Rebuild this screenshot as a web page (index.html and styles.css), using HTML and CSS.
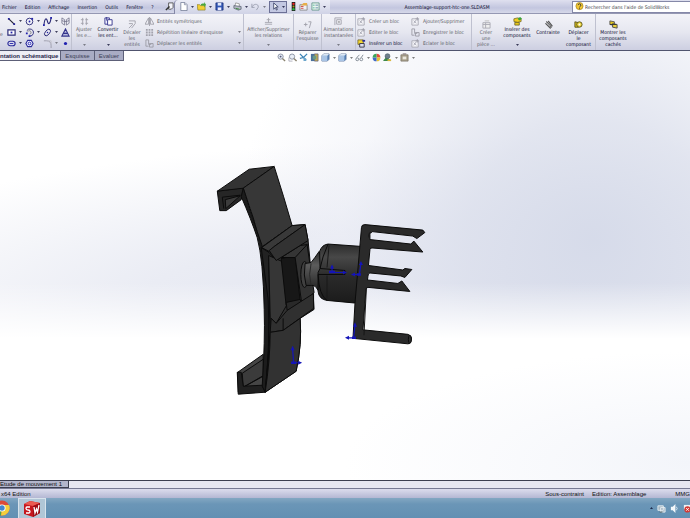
FILE: index.html
```html
<!DOCTYPE html>
<html lang="fr">
<head>
<meta charset="utf-8">
<title>Assemblage-support-htc-one.SLDASM</title>
<link rel="stylesheet" href="styles.css">
</head>
<body>
<svg class="sprite" aria-hidden="true">
  <symbol id="line" viewBox="0 0 10 10"><path d="M2 2L8 8" stroke="#223" stroke-width="1.3"/><path d="M1 1h2v2H1zM7 7h2v2H7z" fill="#229"/></symbol>
  <symbol id="circle" viewBox="0 0 10 10"><circle cx="5" cy="5" r="3.7" fill="none" stroke="#2b2b78"/><circle cx="5" cy="5" r="1" fill="#22a"/><path d="M7 1h2v2H7z" fill="#22a"/></symbol>
  <symbol id="spline" viewBox="0 0 10 10"><path d="M1 9C2 0 4 1 5 5S8 8 9 1" fill="none" stroke="#2b2b78" stroke-width="1.2"/><path d="M0 8h2v2H0zM8 0h2v2H8z" fill="#22a"/></symbol>
  <symbol id="rect" viewBox="0 0 10 10"><path d="M1 2h8v6H1z" fill="#fff" stroke="#2b2b78" stroke-width="1.3"/><path d="M4 4h2v2H4z" fill="#22a"/></symbol>
  <symbol id="arc" viewBox="0 0 10 10"><path d="M2 3a4 4 0 1 1 3 6" fill="none" stroke="#2b2b78"/><path d="M3 4a2 2 0 1 1 2 3" fill="none" stroke="#777"/><path d="M1 5h2v2H1zM4 8h2v2H4z" fill="#22a"/></symbol>
  <symbol id="ellipse" viewBox="0 0 10 10"><ellipse cx="5" cy="5" rx="4.3" ry="2.4" transform="rotate(-50 5 5)" fill="none" stroke="#2b2b78"/><circle cx="5" cy="5" r=".8" fill="#22a"/></symbol>
  <symbol id="slot" viewBox="0 0 10 10"><rect x="1" y="2.5" width="8" height="5" rx="2.5" fill="#dde" stroke="#2b2b9a" stroke-width="1.3"/><path d="M3 5h4" stroke="#22a"/></symbol>
  <symbol id="poly" viewBox="0 0 10 10"><path d="M3 1.5h4L9 5 7 8.500H3L1 5z" fill="#eef" stroke="#2b2b9a" stroke-width="1.2"/><circle cx="5" cy="5" r="1.5" fill="none" stroke="#22a"/></symbol>
  <symbol id="fillet" viewBox="0 0 10 10"><path d="M1 2h3q5 0 5 5v3" fill="none" stroke="#9a9aa8"/><path d="M5 2h4v3" fill="none" stroke="#c4c4ce"/></symbol>
  <symbol id="point" viewBox="0 0 10 10"><circle cx="5" cy="5" r="1.800" fill="#2020b0"/></symbol>
  <symbol id="text" viewBox="0 0 10 10"><path d="M1 9L5 1l4 8zM3 6h4" fill="#b9bde0" stroke="#33338c" stroke-width="1.2"/></symbol>
  <symbol id="plane" viewBox="0 0 10 10"><path d="M1 1l3 2v6L1 7zM6 3l3-2v6L6 9zM4 5h2M1 4l3 1M6 5l3-1" fill="none" stroke="#666680" stroke-width=".8"/></symbol>
  <symbol id="trim" viewBox="0 0 10 10"><path d="M1 3h3M6 3h3M1 7h3M6 7h3M3 1v8M7 1v8" stroke="#a0a0aa" stroke-width="1"/></symbol>
  <symbol id="convert" viewBox="0 0 10 10"><path d="M1 1h5v7H1z" fill="#eef" stroke="#33338c"/><path d="M4 3h5v6H4z" fill="#fff" stroke="#33338c"/><path d="M3 0v4" stroke="#33338c"/></symbol>
  <symbol id="offset" viewBox="0 0 10 10"><path d="M1 1h7v3L4 9M1 4h4v1L1 9" fill="none" stroke="#a0a0aa"/></symbol>
  <symbol id="mirror" viewBox="0 0 10 10"><path d="M4 1v7H0zM6 1v7h4zM5 0v10" fill="none" stroke="#9898a2" stroke-width=".9"/></symbol>
  <symbol id="pattern" viewBox="0 0 10 10"><path d="M1 1h2v2H1zM4 1h2v2H4zM7 1h2v2H7zM1 4h2v2H1zM4 4h2v2H4zM7 4h2v2H7zM1 7h2v2H1zM4 7h2v2H4zM7 7h2v2H7z" fill="#a2a2ac"/></symbol>
  <symbol id="move" viewBox="0 0 10 10"><path d="M1 1h3v5h3M1 1v7h3M5 5h4v4H5z" fill="none" stroke="#9c9ca6"/></symbol>
  <symbol id="relations" viewBox="0 0 10 10"><path d="M5 1v5M3 3h4M1 6h8M1 8h8" stroke="#a4a4ae" fill="none"/></symbol>
  <symbol id="repair" viewBox="0 0 10 10"><path d="M1 5h4M3 3v4M6 2h3L7 9" stroke="#a0a0aa" fill="none"/></symbol>
  <symbol id="snap" viewBox="0 0 10 10"><path d="M1 9V1h8M3 3h5v5H3z" stroke="#a4a4ae" fill="none"/><circle cx="5.500" cy="5.500" r="1" fill="#999"/></symbol>
  <symbol id="block" viewBox="0 0 10 10"><path d="M1 2h7v7H1z" fill="#f4f4f8" stroke="#a8a8b2"/><path d="M3 7l3-4M3 4l3 3M7 0v4M5 2h4" stroke="#9898a4" stroke-width=".8"/></symbol>
  <symbol id="blockin" viewBox="0 0 10 10"><path d="M1 1h6v5H1z" fill="#f3d531" stroke="#665b20" stroke-width=".8"/><path d="M3 5h5v4H3z" fill="#dde" stroke="#334"/><path d="M6 1h3v2H6z" fill="#2b2b9a"/></symbol>
  <symbol id="part" viewBox="0 0 10 10"><path d="M1 3h8v6H1zM1 5h8M4 3v6" fill="#eee" stroke="#aaaab4"/><path d="M3 1h5" stroke="#bbb"/></symbol>
  <symbol id="insert" viewBox="0 0 10 10"><path d="M1 2l4-1 4 1v3L5 6 1 5z" fill="#f1cc22" stroke="#6b641c" stroke-width=".8"/><path d="M5 2l3-2 2 2-3 2z" fill="#39a339"/><path d="M2 6h5v3H2z" fill="#e6c71d" stroke="#5b5520" stroke-width=".8"/></symbol>
  <symbol id="mate" viewBox="0 0 10 10"><path d="M3 2l5 6M5 1.500l4 5M2 4l5 5" stroke="#555" stroke-width="1.4" stroke-linecap="round"/><path d="M3 3l4 4" stroke="#aaa"/></symbol>
  <symbol id="drag" viewBox="0 0 10 10"><path d="M1 2l4 1v5L1 8z" fill="#e2c51e" stroke="#554f1b"/><circle cx="6" cy="5" r="3" fill="#efd842" stroke="#554f1b"/><circle cx="6" cy="5" r="1" fill="#fff"/></symbol>
  <symbol id="show" viewBox="0 0 10 10"><path d="M1 1l5 1v4L1 5z" fill="#dfc21d" stroke="#555"/><path d="M4 4l5 1v4L4 8z" fill="#e8cf3a" stroke="#444"/><path d="M1 5l7 0" stroke="#333"/></symbol>
  <symbol id="pin" viewBox="0 0 10 10"><path d="M4 1h5v5L7 8H4z" fill="#f4f4fa" stroke="#555"/><path d="M1 9l4-4" stroke="#333" stroke-width="1.600"/></symbol>
  <symbol id="new" viewBox="0 0 10 10"><path d="M2 .5h4.500L9 3v6.500H2z" fill="#fff" stroke="#66708c" stroke-width=".8"/><path d="M6 1v2h2" fill="none" stroke="#66708c" stroke-width=".7"/></symbol>
  <symbol id="open" viewBox="0 0 10 10"><path d="M0 3h3l1 1h5v5H1z" fill="#f2cf35" stroke="#8b7a20" stroke-width=".7"/><path d="M4 4c0-2 2-3 4-2V0l2 3-2 3V4z" fill="#49a73c"/></symbol>
  <symbol id="save" viewBox="0 0 10 10"><path d="M1 1h8v8H1z" fill="#3156b5" stroke="#1c2f78" stroke-width=".8"/><path d="M3 1h4v3H3z" fill="#dfe7fa"/><path d="M3 6h4v3H3z" fill="#eef"/></symbol>
  <symbol id="print" viewBox="0 0 10 10"><path d="M3 1l4 1v3H2z" fill="#fff" stroke="#777" stroke-width=".7"/><path d="M1 4l8 1v3L6 9 1 7z" fill="#b5b8c4" stroke="#555d70" stroke-width=".8"/><path d="M3 7l4 1" stroke="#3a8f3a"/></symbol>
  <symbol id="undo" viewBox="0 0 10 10"><path d="M1 2v4h3M1 6c2-5 8-4 7 0L6 9" fill="none" stroke="#a0a4b4" stroke-width="1.1"/></symbol>
  <symbol id="cursor" viewBox="0 0 10 10"><path d="M3 1v7l2-2 1 3 1-.5-1-3h2z" fill="#fff" stroke="#333b60" stroke-width=".9"/></symbol>
  <symbol id="light" viewBox="0 0 10 10"><path d="M3 0h4v10H3z" fill="#222"/><circle cx="5" cy="2" r="1.300" fill="#e22"/><circle cx="5" cy="5" r="1.100" fill="#a91"/><circle cx="5" cy="8" r="1.300" fill="#2b4"/></symbol>
  <symbol id="props" viewBox="0 0 10 10"><path d="M1 3h8v6H1z" fill="#eef0f4" stroke="#777" stroke-width=".8"/><path d="M5 1h4v3H2z" fill="#e7ae49"/><path d="M2 5h3M2 7h3" stroke="#c44"/></symbol>
  <symbol id="list" viewBox="0 0 10 10"><path d="M1 1h8v8H1z" fill="#e8f5ee" stroke="#5d9186" stroke-width=".9"/><path d="M2 3h2v1H2zM2 6h2v1H2z" fill="#3a8"/><path d="M5 3.500h3M5 6.500h3" stroke="#68a"/></symbol>
  <symbol id="zoomfit" viewBox="0 0 10 10"><circle cx="4" cy="4" r="2.900" fill="#e3ebf5" stroke="#8890a0"/><path d="M6 6l3 3" stroke="#8a8370" stroke-width="1.5"/><path d="M3 4h2M4 3v2" stroke="#557"/></symbol>
  <symbol id="zoombox" viewBox="0 0 10 10"><circle cx="4.500" cy="4" r="2.900" fill="#e9eef5" stroke="#8890a0"/><path d="M6.500 6l3 3" stroke="#8a8370" stroke-width="1.5"/><path d="M1 9V5M1 9h4" stroke="#99a" stroke-width=".8"/></symbol>
  <symbol id="prev" viewBox="0 0 10 10"><path d="M1 1l7 7M9 1L5 5l-4 1" stroke="#3b83b5" fill="none" stroke-width="1.4"/><path d="M5 5l3 1v3H5z" fill="#6ba6cc"/></symbol>
  <symbol id="section" viewBox="0 0 10 10"><path d="M1 1h4v8H1z" fill="#4a719c"/><path d="M5 1h4v8H5z" fill="#c4ab52" stroke="#557" stroke-width=".7"/><path d="M3 3h4v4H3z" fill="#6a9a84"/></symbol>
  <symbol id="cube" viewBox="0 0 10 10"><path d="M1 3l2-2h6v6L7 9H1z" fill="#5a86bb" stroke="#4a6590" stroke-width=".7"/><path d="M1 3h6v6H1z" fill="#a9c4e5"/><path d="M3 1h6L7 3H1z" fill="#dce8f6"/></symbol>
  <symbol id="glasses" viewBox="0 0 10 10"><circle cx="2.500" cy="7" r="1.600" fill="none" stroke="#7c8490"/><circle cx="7" cy="7" r="1.600" fill="none" stroke="#7c8490"/><path d="M2 5l3-3M7 5l2-3" stroke="#7c8490"/></symbol>
  <symbol id="ball" viewBox="0 0 10 10"><path d="M5 5V.7A4.300 4.300 0 0 1 9.300 5z" fill="#e34b3c"/><path d="M5 5h4.300A4.300 4.300 0 0 1 5 9.300z" fill="#e5c136"/><path d="M5 5v4.300A4.300 4.300 0 0 1 .7 5z" fill="#3f69c7"/><path d="M5 5H.7A4.300 4.300 0 0 1 5 .7z" fill="#3ba55a"/></symbol>
  <symbol id="scene" viewBox="0 0 10 10"><path d="M0 9L4 4l5 5z" fill="#3c8a4b"/><circle cx="5" cy="3.500" r="2.700" fill="#70808c" stroke="#4b5b68" stroke-width=".7"/><path d="M5 7h4v2H5z" fill="#d9b73e"/></symbol>
  <symbol id="view" viewBox="0 0 10 10"><path d="M1 2h8v7H1z" fill="#aaa18c" stroke="#7a7464" stroke-width=".8"/><path d="M3 4h4v3H3z" fill="#e9e6dc"/><path d="M3 1h4" stroke="#766"/></symbol>
  <symbol id="help" viewBox="0 0 10 10"><circle cx="5" cy="4.500" r="4" fill="#f4c832" stroke="#9a7a1c" stroke-width=".7"/><path d="M3.500 3.500c0-2 3-2 3 0S5 4.500 5 6M5 7v1" stroke="#333" fill="none"/></symbol>
  <symbol id="caret" viewBox="0 0 4 2"><path d="M0 0h4L2 2z" fill="currentColor"/></symbol>
</svg>

<header class="titlebar">
  <nav class="menu">
    <button>Fichier</button><button>Edition</button><button>Affichage</button><button>Insertion</button><button>Outils</button><button>Fenêtre</button><button>?</button>
    <svg class="ic"><use href="#pin"/></svg>
  </nav>
  <div class="quick">
    <button aria-label="Nouveau"><svg class="ic"><use href="#new"/></svg><svg class="caret"><use href="#caret"/></svg></button>
    <button aria-label="Ouvrir"><svg class="ic"><use href="#open"/></svg><svg class="caret"><use href="#caret"/></svg></button>
    <button aria-label="Enregistrer"><svg class="ic"><use href="#save"/></svg><svg class="caret"><use href="#caret"/></svg></button>
    <button aria-label="Imprimer"><svg class="ic"><use href="#print"/></svg><svg class="caret"><use href="#caret"/></svg></button>
    <button aria-label="Annuler" class="off"><svg class="ic"><use href="#undo"/></svg><svg class="caret"><use href="#caret"/></svg></button>
    <button aria-label="Sélectionner" class="pressed"><svg class="ic"><use href="#cursor"/></svg><svg class="caret"><use href="#caret"/></svg></button>
    <button aria-label="Reconstruire" class="narrow"><svg class="ic"><use href="#light"/></svg></button>
    <button aria-label="Propriétés"><svg class="ic"><use href="#props"/></svg></button>
    <button aria-label="Options"><svg class="ic"><use href="#list"/></svg><svg class="caret"><use href="#caret"/></svg></button>
  </div>
  <h1>Assemblage-support-htc-one.SLDASM</h1>
  <label class="search"><svg class="ic"><use href="#help"/></svg><input type="text" aria-label="Rechercher" placeholder="Rechercher dans l'aide de SolidWorks"></label>
</header>

<section class="ribbon">
  <span class="edge off">e</span>
  <div class="tools sep">
    <button aria-label="Ligne"><svg class="ic"><use href="#line"/></svg><svg class="caret"><use href="#caret"/></svg></button>
    <button aria-label="Cercle"><svg class="ic"><use href="#circle"/></svg><svg class="caret"><use href="#caret"/></svg></button>
    <button aria-label="Spline"><svg class="ic"><use href="#spline"/></svg><svg class="caret"><use href="#caret"/></svg></button>
    <button aria-label="Plan"><svg class="ic"><use href="#plane"/></svg></button>
    <button aria-label="Rectangle"><svg class="ic"><use href="#rect"/></svg><svg class="caret"><use href="#caret"/></svg></button>
    <button aria-label="Arc"><svg class="ic"><use href="#arc"/></svg><svg class="caret"><use href="#caret"/></svg></button>
    <button aria-label="Ellipse"><svg class="ic"><use href="#ellipse"/></svg><svg class="caret"><use href="#caret"/></svg></button>
    <button aria-label="Texte"><svg class="ic"><use href="#text"/></svg></button>
    <button aria-label="Rainure"><svg class="ic"><use href="#slot"/></svg><svg class="caret"><use href="#caret"/></svg></button>
    <button aria-label="Polygone"><svg class="ic"><use href="#poly"/></svg></button>
    <button aria-label="Congé" class="off"><svg class="ic"><use href="#fillet"/></svg><svg class="caret"><use href="#caret"/></svg></button>
    <button aria-label="Point"><svg class="ic"><use href="#point"/></svg></button>
  </div>
  <button class="cmd w-s off"><svg class="ic"><use href="#trim"/></svg><span>Ajuster<br>les e...</span><svg class="caret"><use href="#caret"/></svg></button>
  <button class="cmd w-s"><svg class="ic"><use href="#convert"/></svg><span>Convertir<br>les ent...</span><svg class="caret"><use href="#caret"/></svg></button>
  <button class="cmd w-s low off"><svg class="ic"><use href="#offset"/></svg><span>Décaler<br>les<br>entités</span></button>
  <div class="rows wide sep">
    <button class="row off"><svg class="ic"><use href="#mirror"/></svg><span>Entités symétriques</span></button>
    <button class="row off"><svg class="ic"><use href="#pattern"/></svg><span>Répétition linéaire d'esquisse</span><svg class="caret"><use href="#caret"/></svg></button>
    <button class="row off"><svg class="ic"><use href="#move"/></svg><span>Déplacer les entités</span><svg class="caret"><use href="#caret"/></svg></button>
  </div>
  <button class="cmd w-xl off sep"><svg class="ic"><use href="#relations"/></svg><span>Afficher/Supprimer<br>les relations</span><svg class="caret"><use href="#caret"/></svg></button>
  <button class="cmd w-m low off sep"><svg class="ic"><use href="#repair"/></svg><span>Réparer<br>l'esquisse</span></button>
  <button class="cmd w-l off sep"><svg class="ic"><use href="#snap"/></svg><span>Aimantations<br>instantanées</span><svg class="caret"><use href="#caret"/></svg></button>
  <div class="rows mid">
    <button class="row off"><svg class="ic"><use href="#block"/></svg><span>Créer un bloc</span></button>
    <button class="row off"><svg class="ic"><use href="#block"/></svg><span>Editer le bloc</span></button>
    <button class="row"><svg class="ic"><use href="#blockin"/></svg><span>Insérer un bloc</span></button>
  </div>
  <div class="rows end sep">
    <button class="row off"><svg class="ic"><use href="#block"/></svg><span>Ajouter/Supprimer</span></button>
    <button class="row off"><svg class="ic"><use href="#move"/></svg><span>Enregistrer le bloc</span></button>
    <button class="row off"><svg class="ic"><use href="#block"/></svg><span>Eclater le bloc</span></button>
  </div>
  <button class="cmd w-m low off"><svg class="ic"><use href="#part"/></svg><span>Créer<br>une<br>pièce ...</span></button>
  <button class="cmd w-l"><svg class="ic"><use href="#insert"/></svg><span>Insérer des<br>composants</span><svg class="caret"><use href="#caret"/></svg></button>
  <button class="cmd w-m low"><svg class="ic"><use href="#mate"/></svg><span>Contrainte</span></button>
  <button class="cmd w-l low sep"><svg class="ic"><use href="#drag"/></svg><span>Déplacer<br>le<br>composant</span></button>
  <button class="cmd w-l low"><svg class="ic"><use href="#show"/></svg><span>Montrer les<br>composants<br>cachés</span></button>
</section>

<main class="viewport">
  <nav class="tabs">
    <button class="active">ntation schématique</button><button>Esquisse</button><button>Evaluer</button>
  </nav>
  <div class="hud">
    <button aria-label="Zoom au mieux"><svg class="ic"><use href="#zoomfit"/></svg></button>
    <button aria-label="Zoom fenêtre"><svg class="ic"><use href="#zoombox"/></svg></button>
    <button aria-label="Vue précédente"><svg class="ic"><use href="#prev"/></svg></button>
    <button aria-label="Vue en coupe"><svg class="ic"><use href="#section"/></svg></button>
    <button aria-label="Orientation"><svg class="ic"><use href="#cube"/></svg><svg class="caret"><use href="#caret"/></svg></button>
    <button aria-label="Style d'affichage"><svg class="ic"><use href="#cube"/></svg><svg class="caret"><use href="#caret"/></svg></button>
    <button aria-label="Masquer"><svg class="ic"><use href="#glasses"/></svg><svg class="caret"><use href="#caret"/></svg></button>
    <button aria-label="Apparence"><svg class="ic"><use href="#ball"/></svg></button>
    <button aria-label="Scène"><svg class="ic"><use href="#scene"/></svg><svg class="caret"><use href="#caret"/></svg></button>
    <button aria-label="Réglages"><svg class="ic"><use href="#view"/></svg><svg class="caret"><use href="#caret"/></svg></button>
  </div>
  <svg class="model" viewBox="0 51 690 430" role="img" aria-label="Support assemblé">
    <defs>
      <linearGradient id="cyl" x1="0" y1="0" x2="0" y2="1"><stop offset="0" stop-color="#2b2b2b"/><stop offset=".22" stop-color="#484848"/><stop offset=".55" stop-color="#2a2a2a"/><stop offset="1" stop-color="#1b1b1b"/></linearGradient>
      <linearGradient id="neck" x1="0" y1="0" x2="0" y2="1"><stop offset="0" stop-color="#2a2a2a"/><stop offset=".35" stop-color="#5c5c5c"/><stop offset="1" stop-color="#222"/></linearGradient>
    </defs>
    <g stroke="#0b0b0b" stroke-width="1" stroke-linejoin="round">
      <path d="M217 191.500L243 188 241 200 226 211H219.500z" fill="#262626"/>
      <path d="M225 200L240 196 225.500 209z" fill="#3c3c3c"/>
      <path d="M222 197.500L240 195.500M222 197.500L223.500 209" fill="none"/>
      <path d="M217 191.500L249 169.500 274 166.700 243 188.500z" fill="#333"/>
      <path d="M243 188.500L274 166.700Q284 198 292 226L261 248Q254 218 243 188.500z" fill="#373737"/>
      <path d="M261 248L292 226 305 225 308 241 313 293 314 310 300 319Q302 345 296 372L265 393 269 333z" fill="#313131"/>
      <path d="M237.500 373L263 355V387L238 393z" fill="#454545"/>
      <path d="M242 374L263 360V377L243 388z" fill="#3b3b3b"/>
      <path d="M243 388L262 377" fill="none"/>
      <path d="M237 373L241 373 243 387 262 386 265 393 238 395z" fill="#202020"/>
      <path d="M243 188.500L241 197Q251 220 257 238Q263 260 264 310Q265 340 262 387L265 393Q272 330 269 283Q267 258 257 232z" fill="#1c1c1c"/>
      <path d="M261 248L269 253 276 261 268.500 257 270 333 265 393Q270 345 268 300z" fill="#222"/>
      <path d="M268.500 256L282 262 287 305 276 324 270 318z" fill="#363636"/>
      <path d="M281 259L295 256 300 301 286 306z" fill="#171717"/>
      <path d="M286 303L300 300 302 305 287 311z" fill="#292929"/>
      <path d="M281 258L300 246 307 245 296 258z" fill="#353535"/>
      <path d="M295 258L307 245 314 293 302 306z" fill="#323232"/>
      <path d="M261.500 248L292 226 305 225 274 247 269 252z" fill="#393939"/>
      <path d="M274 247L305 225 308 241 276 261 269 251z" fill="#323232"/>
      <path d="M276 324L287 311 313.500 294V309L283 331 270 333 271 319z" fill="#303030"/>
      <path d="M283 319V331" fill="none"/>
      <path d="M270 333L283 331 300 319Q302 345 296 372L265 393Q270 360 270 333z" fill="#323232"/>
      <ellipse cx="304.500" cy="275" rx="3.800" ry="13" fill="#404040"/>
      <path d="M305 264L311 263Q315 258 319 252L322 257V288L318 291Q315 285 311 286H306Q303 276 305 264z" fill="url(#neck)"/>
      <path d="M311 264Q308 275 311 286" fill="none" stroke="#292929"/>
      <path d="M319.500 252Q322 245 328 244.500L363 247 359 304 327 301Q319 300 318 292V273L320 269z" fill="url(#cyl)"/>
      <path d="M328 244.500Q322 258 320 269L345 271V275H318Q319 296 327 301" fill="none"/>
      <path d="M329 246L327 268M327 276V299" fill="none" stroke="#191919"/>
      <path d="M361.500 228Q361.500 225 365 225L423 230.500 425 233 417 239 413 236.500 372 232Q370 232 370 235V240L411 244.500 414 241.500 423 252.500 373 248.500Q370 248 370 250L368.500 266 403 270.500 405 269 412 270 405 278 401 276.500 370 273.500Q368 273.500 368 277L367.500 280.500 398 284 402 281.500 410 292 369 288Q366 287.500 366 290L363 330.500 408 335Q413 337 411 342Q410 345 408 344.500L353 339 355 304z" fill="#2a2a2a"/>
      <path d="M364 336L366.500 288M372 233Q368 232 369 238" fill="none" stroke="#151515"/>
      <ellipse cx="410" cy="340" rx="1.500" ry="4" fill="#303030"/>
    </g>
    <g stroke="#1414b8" fill="none">
      <path d="M292.500 350L293.500 363.500H299M355 326L353.500 338.500H348M332 268V273H344M361 264L359.500 275H354" stroke-width="1.200"/>
      <path d="M290.500 351L292.500 346.500 294.500 351zM298 361.500L302 363.500 298 365.500zM353 327.500L355 323 357 327.500zM349 336.500L345 338.500 349 340.500zM330 269L332 265 334 269zM343 271L347 273 343 275zM359 265.500L361 261.500 363 265.500zM355 273L351 275 355 277z" fill="#1414b8" stroke="none"/>
      <path d="M329 272.500H335M291 363.500H296M357 275H361M352 338.500H356" stroke-width="2.500"/>
    </g>
  </svg>
</main>

<div class="motion"><button>Etude de mouvement 1</button></div>
<footer class="status">
  <span class="edition">x64 Edition</span>
  <span>Sous-contraint</span>
  <span>Edition: Assemblage</span>
  <span class="units">MMG</span>
</footer>
<div class="taskbar">
  <button class="task" aria-label="Chrome"><svg class="app" viewBox="0 0 16 16"><circle cx="8" cy="8" r="7.500" fill="#dc4a38"/><path d="M8 8L1.500 4.200A7.500 7.500 0 0 0 7 15.400z" fill="#48a54c"/><path d="M8 8l-1 7.400A7.500 7.500 0 0 0 15 5H8z" fill="#f3cf3d"/><circle cx="8" cy="8" r="3.600" fill="#fff"/><circle cx="8" cy="8" r="2.700" fill="#4387cf"/></svg></button>
  <button class="task open" aria-label="SolidWorks"><svg class="app" viewBox="0 0 16 16"><path d="M0 3L6 0 16 2V12L9 16 0 13z" fill="#c5161d"/><path d="M0 3L6 0 16 2 9 5z" fill="#ea5a50"/><path d="M9 5L16 2V12L9 16z" fill="#9c0c14"/><path d="M6 6H3Q2 6 2 7.500T4 9T6 10.500T5 12H2M10 6L11 12 12.500 8 13.500 11 15 4" fill="none" stroke="#fff" stroke-width="1.300"/></svg></button>
  <div class="tray">
    <svg class="caret up"><use href="#caret"/></svg>
    <svg class="ic" viewBox="0 0 10 10"><path d="M1 2h6v5H1zM4 4h5v5H4z" fill="#a7b8c4" stroke="#e6eef3"/><path d="M3 9h3" stroke="#455"/></svg>
    <svg class="ic" viewBox="0 0 10 10"><path d="M1 3h2l3-3v10L3 7H1z" fill="#f4f8fb"/><path d="M7 3q2 2 0 4" stroke="#dce8f0" fill="none"/></svg>
    <svg class="ic" viewBox="0 0 10 10"><path d="M1 1h8v5H1z" fill="#edf2f5"/><circle cx="5" cy="6" r="3.500" fill="#d43a35"/><path d="M3.500 4.500l3 3M6.500 4.500l-3 3" stroke="#fff"/></svg>
  </div>
</div>
</body>
</html>
```

FILE: styles.css
```css
* { box-sizing: border-box; }

html, body { height: 100%; margin: 0; }

body {
  display: flex;
  flex-direction: column;
  overflow: hidden;
  font: 5px/6px "DejaVu Sans Condensed", "DejaVu Sans", sans-serif;
  color: #08082c;
}

button {
  display: flex;
  align-items: center;
  flex: none;
  margin: 0;
  padding: 0;
  border: 0;
  background: none;
  font: inherit;
  color: inherit;
  white-space: nowrap;
}

.sprite { display: none; }
.ic { width: 9px; height: 9px; flex: none; }
.caret { width: 3px; height: 2px; flex: none; }
.off { color: #5c5c66; }

/* Title bar */
.titlebar {
  display: flex;
  align-items: center;
  flex: none;
  height: 14px;
  background: linear-gradient(#dfe0ef, #c3c6df 60%, #d6d8e9);
  border-bottom: 1px solid #9598b3;
}
.menu { display: flex; align-items: center; gap: 8px; padding-left: 2px; width: 174px; flex: none; }
.menu .ic { margin-left: auto; }
.quick {
  display: flex;
  align-items: center;
  gap: 3px;
  height: 14px;
  padding: 0 4px;
  border-left: 1px solid #8487a6;
  border-radius: 4px 0 0 0;
  background: linear-gradient(#ebecf6, #d0d3e6);
}
.quick button { gap: 3px; }
.quick .pressed { height: 12px; padding: 0 1px; gap: 2px; border: 1px solid #6c7096; background: #c3c8e2; }
.quick .narrow { width: 6px; justify-content: center; }
.titlebar h1 { flex: 1; margin: 0; padding-right: 8px; text-align: center; font-size: 5px; font-weight: 400; }
.search {
  display: flex;
  align-items: center;
  gap: 1px;
  width: 118px;
  height: 12px;
  padding-left: 2px;
  background: #fff;
  border: 1px solid #8588a8;
  border-right: 0;
}
.search input { flex: 1; min-width: 0; padding: 0; border: 0; background: none; font: inherit; }
.search input::placeholder { color: #404048; opacity: 1; }

/* Command ribbon */
.ribbon {
  display: flex;
  flex: none;
  height: 37px;
  background: linear-gradient(#f3f3f8, #e6e7f0 50%, #cdcfe1);
  border-bottom: 1px solid #50546e;
}
.sep { border-right: 1px solid #bfc1d0; }
.edge { display: flex; align-items: center; width: 7px; padding-top: 4px; }
.tools {
  display: grid;
  grid-template-columns: repeat(3, 18px) 11px;
  grid-auto-rows: 11px;
  align-content: center;
  width: 65px;
}
.tools button { gap: 3px; }
.cmd { flex-direction: column; padding: 3px 0 4px; text-align: center; }
.cmd .caret { margin-top: auto; }
.cmd.low { padding-top: 6px; }
.w-s { width: 24px; }
.w-m { width: 28px; }
.w-l { width: 34px; }
.w-xl { width: 50px; }
.rows { display: grid; grid-auto-rows: 11px; align-content: center; }
.wide { width: 100px; padding-left: 1px; }
.mid { width: 54px; padding-left: 1px; }
.end { width: 62px; padding-left: 1px; }
.row { gap: 3px; padding: 0 2px 0 0; }
.row .caret { margin-left: auto; }

/* Graphics area */
.viewport {
  position: relative;
  flex: 1;
  min-height: 0;
  background:
    radial-gradient(50% 26% at 100% 96%, #f3f5fa, rgba(255, 255, 255, 0)),
    linear-gradient(rgba(255, 255, 255, 0) 54%, #fff 67%),
    radial-gradient(52% 78% at 86% 44%, rgba(213, 218, 233, .95), rgba(219, 223, 236, .8) 35%, rgba(236, 238, 246, .45) 70%, rgba(255, 255, 255, 0)),
    radial-gradient(110% 40% at 75% 60%, #dfe2ee, #eaecf4 50%, #fff);
}
.model { display: block; width: 100%; height: 100%; }
.tabs { position: absolute; top: 0; left: 0; display: flex; font: 6px/8px "Liberation Sans", sans-serif; }
.tabs button {
  height: 10px;
  padding: 0 4px;
  border: 1px solid #5d6078;
  border-top: 0;
  border-left: 0;
  background: #a9acc4;
  color: #3c3f56;
}
.tabs .active { padding: 0 2px 0 0; background: #eeeef5; font-weight: 700; color: #26264a; }
.hud { position: absolute; top: 2px; left: 277px; display: flex; gap: 2px; color: #555; }
.hud button { gap: 3px; }

/* Bottom bars */
.motion { display: flex; flex: none; height: 8px; border-top: 1px solid #3c3f50; background: #e6e7f1; font: 6px/6px "Liberation Sans", sans-serif; color: #111; }
.motion button { padding: 0 6px 0 0; border-right: 1px solid #3c3f50; border-bottom: 1px solid #3c3f50; background: #b3b6cc; }
.status {
  display: flex;
  align-items: center;
  gap: 8px;
  flex: none;
  height: 10px;
  padding-left: 1px;
  border-top: 1px solid #777a94;
  background: linear-gradient(#dcdded, #b4b7d3);
  font: 6px/8px "Liberation Sans", sans-serif;
  color: #111;
}
.edition { margin-right: auto; }
.units { margin-left: 21px; }
.taskbar { display: flex; flex: none; height: 20px; background: linear-gradient(#83a7c2, #6b96b7 30%, #6290b3); }
.task { justify-content: center; width: 28px; height: 20px; }
.task:first-child { width: 18px; justify-content: flex-start; }
.task:first-child .app { margin-left: -6px; }
.open { border: 1px solid #d7e3ec; border-bottom: 0; background: #b0c6d6; }
.app { width: 16px; height: 16px; flex: none; }
.tray { display: flex; align-items: center; gap: 4px; margin-left: auto; overflow: hidden; width: 40px; }
.up { transform: rotate(180deg); }
```
